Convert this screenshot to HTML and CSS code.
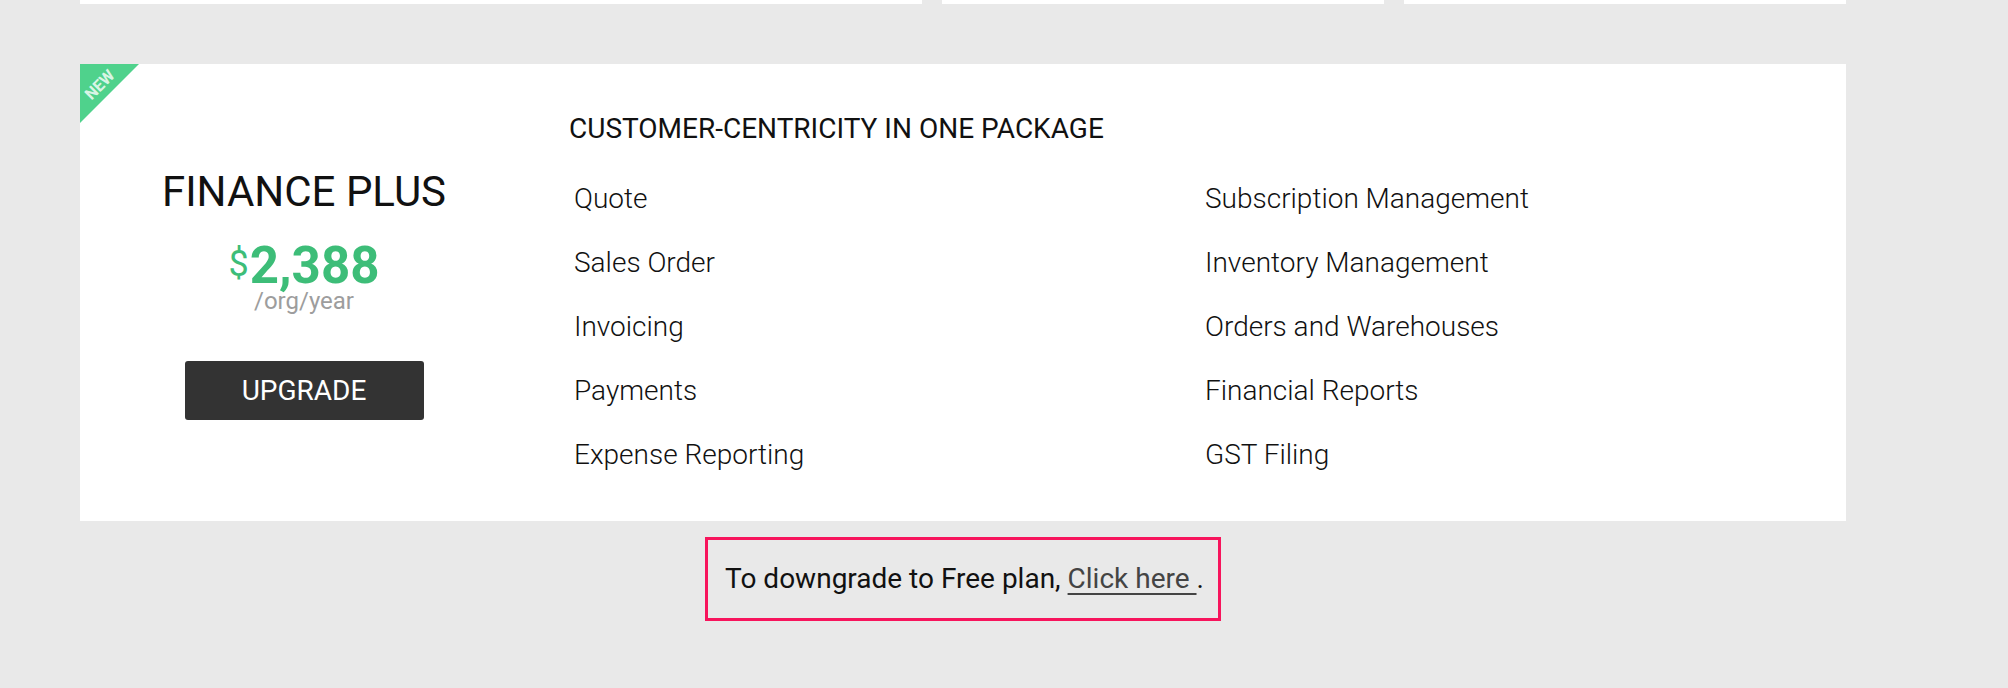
FILE: index.html
```html
<!DOCTYPE html>
<html lang="en">
<head>
<meta charset="utf-8">
<title>Finance Plus</title>
<link rel="stylesheet" href="styles.css">
</head>
<body>
<div class="page">
  <div class="plans-strip">
    <div class="plan-stub plan-stub-faded"></div>
    <div class="plan-stub-group">
      <div class="plan-stub"></div>
      <div class="plan-stub"></div>
      <div class="plan-stub"></div>
    </div>
  </div>

  <section class="plan-card">
    <span class="ribbon"><span class="ribbon-text">NEW</span></span>
    <div class="plan-summary">
      <h2 class="plan-name">FINANCE PLUS</h2>
      <div class="plan-price"><span class="currency">$</span>2,388</div>
      <div class="plan-period">/org/year</div>
      <button class="upgrade-btn" type="button">UPGRADE</button>
    </div>
    <div class="plan-features">
      <h3 class="features-title">CUSTOMER-CENTRICITY IN ONE PACKAGE</h3>
      <ul class="features-list">
        <li>Quote</li>
        <li>Sales Order</li>
        <li>Invoicing</li>
        <li>Payments</li>
        <li>Expense Reporting</li>
        <li>Subscription Management</li>
        <li>Inventory Management</li>
        <li>Orders and Warehouses</li>
        <li>Financial Reports</li>
        <li>GST Filing</li>
      </ul>
    </div>
  </section>

  <div class="downgrade-row">
    <p class="downgrade-note">To downgrade to Free plan, <a href="#" class="downgrade-link">Click here </a>.</p>
  </div>
</div>
</body>
</html>
```

FILE: styles.css
```css
* { box-sizing: border-box; }

html, body {
  margin: 0;
  padding: 0;
  background: #e9e9e9;
}

body {
  font-family: Roboto, "Noto Sans", "Liberation Sans", sans-serif;
  color: #111;
  width: 2008px;
  height: 688px;
  overflow: hidden;
}

.page {
  padding-left: 80px;
  width: 1846px;
}

.plans-strip {
  display: flex;
  height: 4px;
}

.plan-stub-faded {
  width: 400px;
  height: 4px;
  background: linear-gradient(to right, #f3f3f3 0%, #f3f3f3 94%, #ececec 100%);
}

.plan-stub-group {
  display: flex;
  gap: 20px;
}

.plan-stub {
  width: 442px;
  height: 4px;
  background: #fff;
}

.plan-card {
  position: relative;
  margin-top: 60px;
  width: 1766px;
  background: #fff;
  display: flex;
  overflow: hidden;
}

.ribbon {
  position: absolute;
  left: 0;
  top: 0;
  width: 59px;
  height: 59px;
  background: #4fd28c;
  clip-path: polygon(0 0, 100% 0, 0 100%);
}

.ribbon-text {
  position: absolute;
  left: 20px;
  top: 21px;
  transform: translate(-50%, -50%) rotate(-45deg);
  font-size: 16px;
  font-weight: 700;
  line-height: 16px;
  color: rgba(255, 255, 255, 0.8);
}

.plan-summary {
  width: 448px;
  flex-shrink: 0;
  text-align: center;
  padding-top: 104px;
}

.plan-name {
  margin: 0;
  font-size: 42px;
  line-height: 48px;
  font-weight: 400;
  color: #111;
}

.plan-price {
  margin-top: 24px;
  font-size: 51px;
  line-height: 48px;
  font-weight: 700;
  color: #3dbd78;
}

.currency {
  font-size: 36px;
  font-weight: 400;
  vertical-align: 7px;
  margin-right: 1px;
}

.plan-period {
  margin-top: -1px;
  font-size: 24px;
  line-height: 24px;
  color: #9d9d9d;
}

.upgrade-btn {
  margin-top: 48px;
  width: 239px;
  height: 59px;
  border: 0;
  border-radius: 3px;
  background: #333333;
  color: #fff;
  font-family: inherit;
  font-size: 28px;
  line-height: 59px;
  padding: 0;
  cursor: pointer;
}

.plan-features {
  flex: 1;
  padding: 49px 0 34px 41px;
}

.features-title {
  margin: 0 0 22px;
  font-size: 28px;
  line-height: 32px;
  font-weight: 400;
  color: #111;
}

.features-list {
  list-style: none;
  margin: 0;
  padding: 0 0 0 5px;
  display: grid;
  grid-template-columns: 631px 631px;
  grid-template-rows: repeat(5, 64px);
  grid-auto-flow: column;
}

.features-list li {
  font-size: 28px;
  line-height: 64px;
  font-weight: 300;
  color: #111;
}

.downgrade-row {
  width: 1766px;
  display: flex;
  justify-content: center;
  margin-top: 16px;
}

.downgrade-note {
  margin: 0;
  border: 3px solid #f7145c;
  padding: 23px 14px 23px 17px;
  font-size: 28px;
  line-height: 32px;
  color: #111;
}

.downgrade-link {
  color: #444;
  text-decoration: underline;
  text-decoration-thickness: 2px;
  text-underline-offset: 5px;
}
```
